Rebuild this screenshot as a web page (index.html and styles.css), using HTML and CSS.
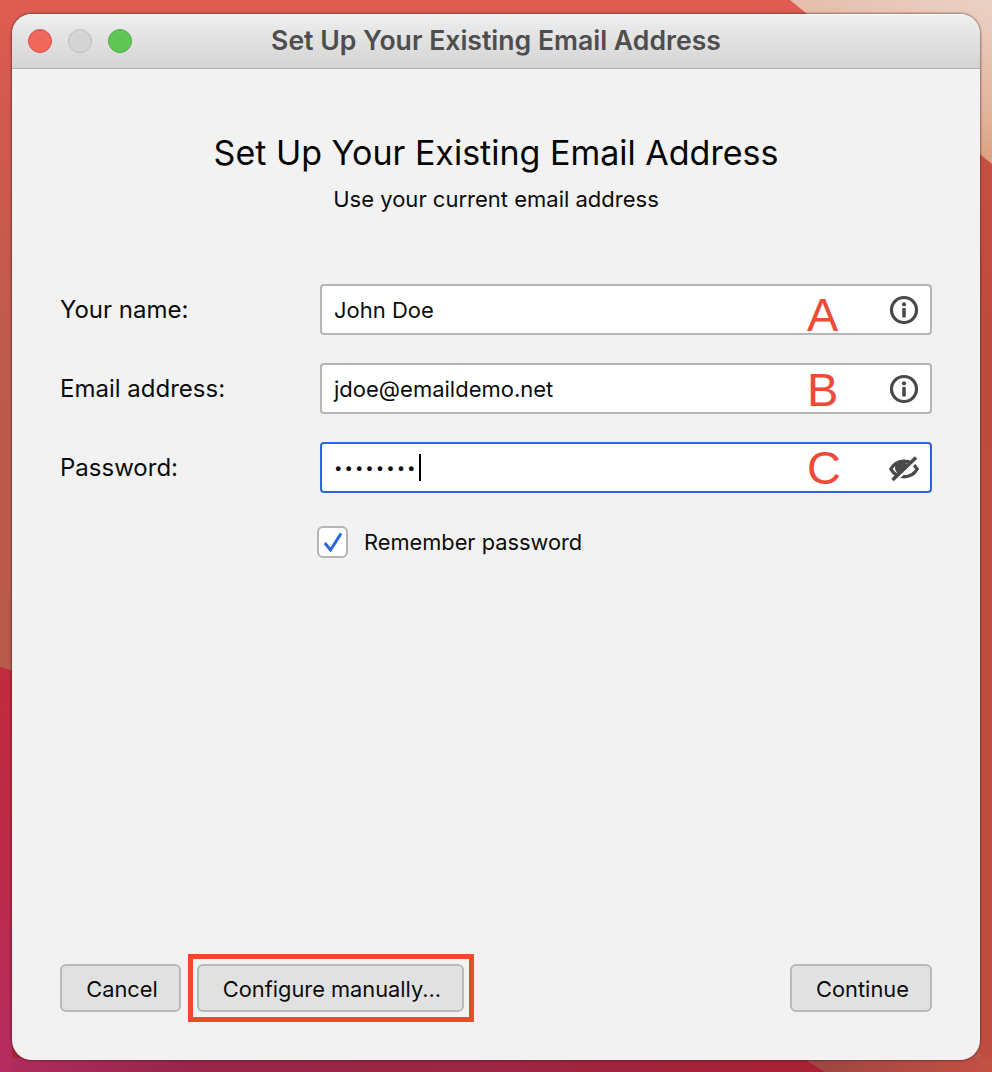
FILE: index.html
```html
<!DOCTYPE html>
<html lang="en">
<head>
<meta charset="utf-8">
<title>Set Up Your Existing Email Address</title>
<link rel="stylesheet" href="styles.css">
</head>
<body>
<main class="window">
  <header class="titlebar">
    <div class="lights">
      <span class="light light-close"></span>
      <span class="light light-min"></span>
      <span class="light light-max"></span>
    </div>
    <div class="window-title">Set Up Your Existing Email Address</div>
  </header>
  <section class="content">
    <div class="intro">
      <h1 class="heading">Set Up Your Existing Email Address</h1>
      <p class="subheading">Use your current email address</p>
    </div>
    <div class="form">
      <label class="label">Your name:</label>
      <div class="field">
        <span class="value">John Doe</span>
        <span class="marker">A</span>
        <svg class="field-icon" viewBox="0 0 30 30"><circle cx="15" cy="15" r="12.500" fill="none" stroke="#4a4a4a" stroke-width="3.200"/><circle cx="15" cy="9.400" r="2.100" fill="#4a4a4a"/><rect x="13.200" y="13" width="3.600" height="9.500" rx="0.600" fill="#4a4a4a"/></svg>
      </div>
      <label class="label">Email address:</label>
      <div class="field">
        <span class="value">jdoe@emaildemo.net</span>
        <span class="marker marker-b">B</span>
        <svg class="field-icon" viewBox="0 0 30 30"><circle cx="15" cy="15" r="12.500" fill="none" stroke="#4a4a4a" stroke-width="3.200"/><circle cx="15" cy="9.400" r="2.100" fill="#4a4a4a"/><rect x="13.200" y="13" width="3.600" height="9.500" rx="0.600" fill="#4a4a4a"/></svg>
      </div>
      <label class="label">Password:</label>
      <div class="field field-focus">
        <span class="value dots">••••••••</span><span class="caret"></span>
        <span class="marker marker-c">C</span>
        <svg class="field-icon" viewBox="0 0 30 30"><path d="M1.800 16C5 10.500 10 8.200 15 8.200c5 0 10 2.300 13.200 7.800-3.200 5.500-8.200 7.800-13.200 7.800-5 0-10-2.300-13.200-7.800z" fill="none" stroke="#4a4a4a" stroke-width="3.400"/><circle cx="12.500" cy="15" r="6.500" fill="#4a4a4a"/><path d="M6 28 28.500 7" stroke="#fff" stroke-width="3"/><path d="M3.500 27 27 4.500" stroke="#4a4a4a" stroke-width="3.600"/></svg>
      </div>
      <div class="remember">
        <span class="checkbox"><svg class="check" viewBox="0 0 20 20"><path d="M1.800 11 7.500 18 18 1.500" fill="none" stroke="#2a66e0" stroke-width="3"/></svg></span>
        <span class="remember-text">Remember password</span>
      </div>
    </div>
    <footer class="actions">
      <button class="btn btn-cancel">Cancel</button>
      <div class="highlight"><button class="btn btn-manual">Configure manually...</button></div>
      <button class="btn btn-continue">Continue</button>
    </footer>
  </section>
</main>
</body>
</html>
```
FILE: styles.css
```css
* { box-sizing: border-box; }
html, body { margin: 0; height: 100%; }
body {
  width: 992px;
  height: 1072px;
  overflow: hidden;
  padding: 14px 12px 12px;
  position: relative;
  font-family: Inter, "Liberation Sans", sans-serif;
  color: #0c0c0c;
  background:
    linear-gradient(90deg, #9a4540, #c55045) right bottom / 192px 14px no-repeat,
    linear-gradient(180deg, #cf5348, #bf4b40 30%, #c04d41 100%) right top / 12px 100% no-repeat,
    linear-gradient(180deg, #e05c52 0, #d55a4f 8%, #bc5a4c 35%, #b85a4a 62%);
}
body::before {
  content: "";
  position: absolute;
  inset: 0;
  background: linear-gradient(200deg, #ebd2c6 0, #e3b49c 8%, #cf8158 17%);
  clip-path: polygon(790px 0, 992px 0, 992px 164px);
}
body::after {
  content: "";
  position: absolute;
  inset: 0;
  background:
    linear-gradient(180deg, #c22a3c 664px, #bc2a48 860px, #b52c60 1072px) left top / 12px 100% no-repeat,
    linear-gradient(90deg, #b02c5e 0, #95264a 200px, #9c2644 500px, #a82034 800px) left bottom / 100% 14px no-repeat,
    #a8223a;
  clip-path: polygon(0 667px, 400px 800px, 780px 1045px, 825px 1072px, 0 1072px);
}
.window {
  position: relative;
  z-index: 1;
  height: 1046px;
  display: flex;
  flex-direction: column;
  border-radius: 20px;
  overflow: hidden;
  background: #f2f2f2;
  box-shadow: 0 0 2px 1px rgba(70, 30, 30, 0.5);
}
.titlebar {
  flex: none;
  height: 55px;
  display: flex;
  align-items: center;
  position: relative;
  background: linear-gradient(180deg, #f0f0f0 0, #e9e9e9 20%, #d4d4d4 100%);
  border-bottom: 1px solid #b0b0b0;
  box-shadow: inset 0 1px 0 #fff;
}
.lights { display: flex; gap: 16px; padding-left: 16px; }
.light { width: 24px; height: 24px; border-radius: 50%; }
.light-close { background: #f0675c; border: 1px solid #d8504a; }
.light-min { background: #d5d5d5; border: 1px solid #bdbdbd; }
.light-max { background: #60c656; border: 1px solid #4fae46; }
.window-title {
  position: absolute;
  left: 0;
  right: 0;
  top: 10px;
  text-align: center;
  font-size: 26.6px;
  line-height: 32px;
  font-weight: 600;
  color: #4e4e4e;
}
.content {
  flex: 1;
  display: flex;
  flex-direction: column;
  padding: 61px 48px 48px;
}
.intro { text-align: center; }
.heading {
  margin: 0;
  font-size: 34px;
  line-height: 46px;
  font-weight: 400;
  color: #050505;
}
.subheading {
  margin: 8px 0 0;
  font-size: 22px;
  line-height: 30px;
}
.form {
  margin-top: 70px;
  display: grid;
  grid-template-columns: 260px 612px;
  row-gap: 28px;
  align-items: center;
}
.label { font-size: 24px; line-height: 30px; }
.field {
  height: 51px;
  display: flex;
  align-items: center;
  position: relative;
  padding: 0 11px 0 12px;
  background: #fff;
  border: 2px solid #b5b5b5;
  border-radius: 4px;
  font-size: 22px;
}
.field-focus { border-color: #2a66e0; }
.value { line-height: 30px; }
.dots { font-size: 15px; letter-spacing: 2px; }
.caret { width: 2px; height: 27px; background: #000; margin-left: 1px; }
.marker {
  position: absolute;
  left: 485px;
  top: 3px;
  font-family: "Liberation Sans", Arial, sans-serif;
  font-size: 47px;
  line-height: 52px;
  color: #ee4b36;
}
.marker-b { top: -1px; }
.marker-c { top: -2px; }
.field-icon { width: 30px; height: 30px; margin-left: auto; flex: none; }
.remember {
  grid-column: 2;
  margin: 5px 0 0 -3px;
  display: flex;
  align-items: center;
  gap: 16px;
}
.checkbox {
  width: 31px;
  height: 32px;
  display: flex;
  align-items: center;
  justify-content: center;
  background: #fff;
  border: 2px solid #b5b5b5;
  border-radius: 6px;
}
.check { width: 20px; height: 20px; }
.remember-text { font-size: 21.8px; line-height: 30px; }
.actions {
  margin-top: auto;
  display: flex;
  gap: 16px;
}
.btn {
  height: 48px;
  padding: 1px 0 0 3px;
  font: inherit;
  font-size: 21.8px;
  color: #0c0c0c;
  background: #e1e1e1;
  border: 2px solid #b9b9b9;
  border-radius: 6px;
}
.btn-cancel { width: 121px; }
.highlight {
  display: flex;
  margin: -10px -10px -10px -9px;
  padding: 5px 5px 5px 4px;
  border: 5px solid #ef4a2c;
}
.btn-manual { width: 267px; }
.btn-continue { width: 142px; margin-left: auto; }
```
